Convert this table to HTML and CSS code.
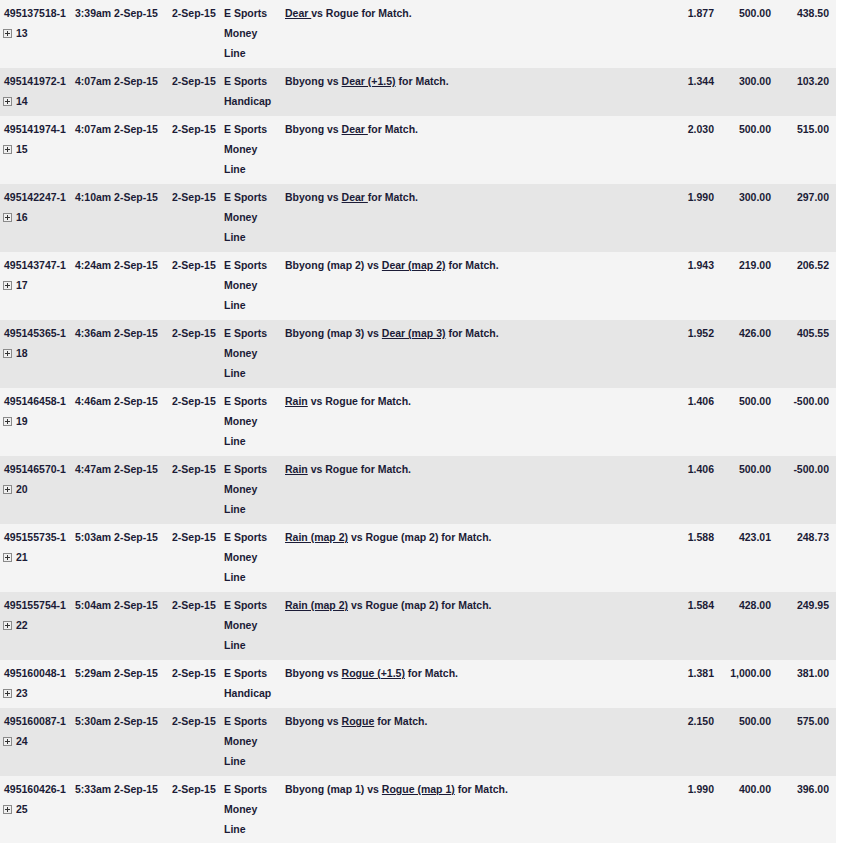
FILE: index.html
```html
<!DOCTYPE html>
<html>
<head>
<meta charset="utf-8">
<link rel="stylesheet" href="styles.css">
</head>
<body>
<table class="bets">
<colgroup>
<col class="c-id"><col class="c-time"><col class="c-date"><col class="c-sport"><col class="c-desc"><col class="c-odds"><col class="c-stake"><col class="c-win">
</colgroup>
<tbody>
<tr class="light"><td>495137518-1<br><span class="plus"></span> 13</td><td>3:39am 2-Sep-15</td><td>2-Sep-15</td><td>E Sports<br>Money<br>Line</td><td><a href="#">Dear </a>vs Rogue for Match.</td><td class="num">1.877</td><td class="num">500.00</td><td class="num last">438.50</td></tr>
<tr class="dark"><td>495141972-1<br><span class="plus"></span> 14</td><td>4:07am 2-Sep-15</td><td>2-Sep-15</td><td>E Sports<br>Handicap</td><td>Bbyong vs <a href="#">Dear (+1.5)</a> for Match.</td><td class="num">1.344</td><td class="num">300.00</td><td class="num last">103.20</td></tr>
<tr class="light"><td>495141974-1<br><span class="plus"></span> 15</td><td>4:07am 2-Sep-15</td><td>2-Sep-15</td><td>E Sports<br>Money<br>Line</td><td>Bbyong vs <a href="#">Dear </a>for Match.</td><td class="num">2.030</td><td class="num">500.00</td><td class="num last">515.00</td></tr>
<tr class="dark"><td>495142247-1<br><span class="plus"></span> 16</td><td>4:10am 2-Sep-15</td><td>2-Sep-15</td><td>E Sports<br>Money<br>Line</td><td>Bbyong vs <a href="#">Dear </a>for Match.</td><td class="num">1.990</td><td class="num">300.00</td><td class="num last">297.00</td></tr>
<tr class="light"><td>495143747-1<br><span class="plus"></span> 17</td><td>4:24am 2-Sep-15</td><td>2-Sep-15</td><td>E Sports<br>Money<br>Line</td><td>Bbyong (map 2) vs <a href="#">Dear (map 2)</a> for Match.</td><td class="num">1.943</td><td class="num">219.00</td><td class="num last">206.52</td></tr>
<tr class="dark"><td>495145365-1<br><span class="plus"></span> 18</td><td>4:36am 2-Sep-15</td><td>2-Sep-15</td><td>E Sports<br>Money<br>Line</td><td>Bbyong (map 3) vs <a href="#">Dear (map 3)</a> for Match.</td><td class="num">1.952</td><td class="num">426.00</td><td class="num last">405.55</td></tr>
<tr class="light"><td>495146458-1<br><span class="plus"></span> 19</td><td>4:46am 2-Sep-15</td><td>2-Sep-15</td><td>E Sports<br>Money<br>Line</td><td><a href="#">Rain</a> vs Rogue for Match.</td><td class="num">1.406</td><td class="num">500.00</td><td class="num last">-500.00</td></tr>
<tr class="dark"><td>495146570-1<br><span class="plus"></span> 20</td><td>4:47am 2-Sep-15</td><td>2-Sep-15</td><td>E Sports<br>Money<br>Line</td><td><a href="#">Rain</a> vs Rogue for Match.</td><td class="num">1.406</td><td class="num">500.00</td><td class="num last">-500.00</td></tr>
<tr class="light"><td>495155735-1<br><span class="plus"></span> 21</td><td>5:03am 2-Sep-15</td><td>2-Sep-15</td><td>E Sports<br>Money<br>Line</td><td><a href="#">Rain (map 2)</a> vs Rogue (map 2) for Match.</td><td class="num">1.588</td><td class="num">423.01</td><td class="num last">248.73</td></tr>
<tr class="dark"><td>495155754-1<br><span class="plus"></span> 22</td><td>5:04am 2-Sep-15</td><td>2-Sep-15</td><td>E Sports<br>Money<br>Line</td><td><a href="#">Rain (map 2)</a> vs Rogue (map 2) for Match.</td><td class="num">1.584</td><td class="num">428.00</td><td class="num last">249.95</td></tr>
<tr class="light"><td>495160048-1<br><span class="plus"></span> 23</td><td>5:29am 2-Sep-15</td><td>2-Sep-15</td><td>E Sports<br>Handicap</td><td>Bbyong vs <a href="#">Rogue (+1.5)</a> for Match.</td><td class="num">1.381</td><td class="num">1,000.00</td><td class="num last">381.00</td></tr>
<tr class="dark"><td>495160087-1<br><span class="plus"></span> 24</td><td>5:30am 2-Sep-15</td><td>2-Sep-15</td><td>E Sports<br>Money<br>Line</td><td>Bbyong vs <a href="#">Rogue</a> for Match.</td><td class="num">2.150</td><td class="num">500.00</td><td class="num last">575.00</td></tr>
<tr class="light"><td>495160426-1<br><span class="plus"></span> 25</td><td>5:33am 2-Sep-15</td><td>2-Sep-15</td><td>E Sports<br>Money<br>Line</td><td>Bbyong (map 1) vs <a href="#">Rogue (map 1)</a> for Match.</td><td class="num">1.990</td><td class="num">400.00</td><td class="num last">396.00</td></tr>
</tbody>
</table>
</body>
</html>
```
FILE: styles.css
```css
html, body {
  margin: 0;
  padding: 0;
  background: #ffffff;
}
.bets {
  border-collapse: collapse;
  table-layout: fixed;
  width: 836px;
  font-family: "Liberation Sans", Arial, sans-serif;
  font-size: 10.5px;
  font-weight: bold;
  color: #1b1b36;
  line-height: 20px;
}
.c-id { width: 71px; }
.c-time { width: 97px; }
.c-date { width: 52px; }
.c-sport { width: 61px; }
.c-desc { width: 379px; }
.c-odds { width: 58px; }
.c-stake { width: 57px; }
.c-win { width: 61px; }
.bets td {
  vertical-align: top;
  padding: 3px 4px 5px 4px;
  white-space: nowrap;
}
.bets td.num { text-align: right; }
.bets td.last { padding-right: 7px; }
.light { background: #f4f4f4; }
.dark { background: #e6e6e6; }
.bets a {
  color: #1b1b36;
  text-decoration: underline;
}
.plus {
  display: inline-block;
  position: relative;
  width: 7px;
  height: 7px;
  border: 1px solid #8a8a8a;
  background: #f0f0f0;
  vertical-align: -1px;
  margin-left: -1px;
  margin-right: 1px;
}
.plus::before, .plus::after {
  content: "";
  position: absolute;
  background: #333;
}
.plus::before { left: 1px; top: 3px; width: 5px; height: 1px; }
.plus::after { left: 3px; top: 1px; width: 1px; height: 5px; }
```
